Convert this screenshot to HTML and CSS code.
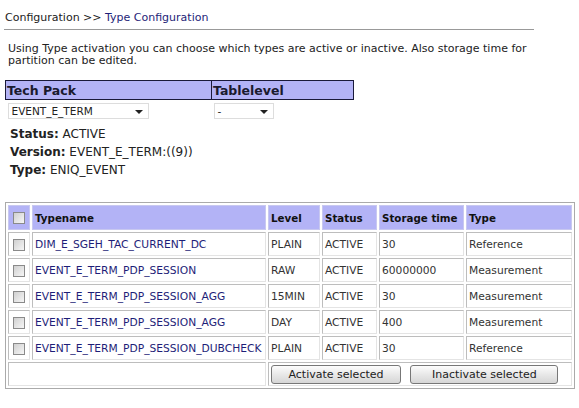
FILE: index.html
```html
<!DOCTYPE html>
<html>
<head>
<meta charset="utf-8">
<link rel="stylesheet" href="styles.css">
</head>
<body>
<div class="crumb">Configuration &gt;&gt; <span class="crumb-cur">Type Configuration</span></div>
<div class="rule"></div>
<p class="desc">Using Type activation you can choose which types are active or inactive. Also storage time for partition can be edited.</p>

<table class="pick">
  <tr>
    <th class="pick-tp">Tech Pack</th>
    <th class="pick-tl">Tablelevel</th>
  </tr>
  <tr>
    <td><div class="sel sel-tp"><span>EVENT_E_TERM</span><i class="arrow"></i></div></td>
    <td><div class="sel sel-tl"><span>-</span><i class="arrow"></i></div></td>
  </tr>
</table>

<div class="info">
  <div><b>Status:</b> ACTIVE</div>
  <div><b>Version:</b> EVENT_E_TERM:((9))</div>
  <div><b>Type:</b> ENIQ_EVENT</div>
</div>

<table class="grid">
  <tr class="head">
    <th class="c-cb"><span class="cb"></span></th>
    <th class="c-name">Typename</th>
    <th class="c-lvl">Level</th>
    <th class="c-st">Status</th>
    <th class="c-sto">Storage time</th>
    <th class="c-type">Type</th>
  </tr>
  <tr>
    <td class="c-cb"><span class="cb"></span></td>
    <td class="name">DIM_E_SGEH_TAC_CURRENT_DC</td>
    <td>PLAIN</td><td>ACTIVE</td><td>30</td><td>Reference</td>
  </tr>
  <tr>
    <td class="c-cb"><span class="cb"></span></td>
    <td class="name">EVENT_E_TERM_PDP_SESSION</td>
    <td>RAW</td><td>ACTIVE</td><td>60000000</td><td>Measurement</td>
  </tr>
  <tr>
    <td class="c-cb"><span class="cb"></span></td>
    <td class="name">EVENT_E_TERM_PDP_SESSION_AGG</td>
    <td>15MIN</td><td>ACTIVE</td><td>30</td><td>Measurement</td>
  </tr>
  <tr>
    <td class="c-cb"><span class="cb"></span></td>
    <td class="name">EVENT_E_TERM_PDP_SESSION_AGG</td>
    <td>DAY</td><td>ACTIVE</td><td>400</td><td>Measurement</td>
  </tr>
  <tr>
    <td class="c-cb"><span class="cb"></span></td>
    <td class="name">EVENT_E_TERM_PDP_SESSION_DUBCHECK</td>
    <td>PLAIN</td><td>ACTIVE</td><td>30</td><td>Reference</td>
  </tr>
  <tr class="foot">
    <td colspan="2"></td>
    <td colspan="4" class="btns">
      <button class="btn btn-a">Activate selected</button>
      <button class="btn btn-i">Inactivate selected</button>
    </td>
  </tr>
</table>
</body>
</html>
```
FILE: styles.css
```css
html, body {
  margin: 0;
  padding: 0;
  background: #fff;
}
body {
  font-family: "DejaVu Sans", Verdana, sans-serif;
  font-size: 11px;
  color: #222;
  padding: 0 5px;
}
.crumb {
  padding-top: 11px;
  height: 14px;
  font-size: 11px;
  color: #222;
}
.crumb-cur { color: #1e1e78; }
.rule {
  width: 530px;
  margin-left: -1px;
  margin-top: 4px;
  border-top: 1px solid #999;
  height: 1px;
}
.desc {
  margin: 12px 0 0 3px;
  width: 540px;
  line-height: 12px;
  font-size: 11px;
}
.pick {
  margin-top: 13px;
  border-collapse: collapse;
  width: 349px;
}
.pick th {
  background: #b3b3f6;
  border: 1px solid #1a1a3a;
  text-align: left;
  font-size: 12.5px;
  font-weight: bold;
  color: #1a1a2e;
  height: 18px;
  padding: 0 1px;
}
.pick-tp { width: 203px; }
.pick td { padding: 3px 0 0 2px; vertical-align: top; }
.sel {
  display: flex;
  align-items: center;
  justify-content: space-between;
  height: 16px;
  border: 1px solid #ddd;
  padding: 0 5px 0 3px;
  box-sizing: border-box;
  font-size: 10.5px;
  background: #fff;
}
.sel-tp { width: 141px; }
.sel-tl { width: 60px; }
.arrow {
  width: 0; height: 0;
  border-left: 4px solid transparent;
  border-right: 4px solid transparent;
  border-top: 4px solid #222;
  margin-top: 2px;
}
.info {
  margin: 6px 0 0 5px;
  font-size: 12px;
  line-height: 18px;
}
.info b { font-weight: bold; }
.grid {
  margin-top: 23px;
  border: 1px solid #aaa;
  border-spacing: 2px;
  width: 570px;
  table-layout: fixed;
}
.grid th, .grid td {
  height: 22px;
  padding: 0 2px;
  text-align: left;
  white-space: nowrap;
  overflow: hidden;
  font-size: 10.7px;
}
.grid td {
  border: 1px solid #cfcfcf;
  border-right-color: #e4e4e4;
  border-bottom-color: #e4e4e4;
  border-top-color: #bdbdbd;
  border-left-color: #bdbdbd;
  color: #333;
}
.grid th {
  background: #b3b3f6;
  border: 1px solid #c8c8f0;
  font-weight: bold;
  font-size: 10.3px;
  color: #111;
  height: 23px;
}
.grid .c-cb { width: 20px; text-align: center; padding: 0; }
.c-name { width: 228px; }
.c-lvl { width: 46px; }
.c-st { width: 49px; }
.c-sto { width: 79px; }
.grid .name { color: #1e1e78; }
.cb {
  display: inline-block;
  width: 12px;
  height: 12px;
  border: 1px solid #8a8a8a;
  box-sizing: border-box;
  background: linear-gradient(135deg, #d0d0d0, #f6f6f6);
  vertical-align: middle;
}
.foot td { height: 22px; overflow: visible; }
.btns { padding: 0 0 0 2px; }
.btn {
  font-family: "DejaVu Sans", Verdana, sans-serif;
  font-size: 11px;
  color: #222;
  height: 19px;
  padding: 0;
  box-sizing: border-box;
  border: 1px solid #777;
  border-radius: 3px;
  background: linear-gradient(#fdfdfd, #e8e8e8 50%, #d6d6d6);
  vertical-align: middle;
}
.btn-a { width: 130px; }
.btn-i { width: 148px; margin-left: 6px; }
```
